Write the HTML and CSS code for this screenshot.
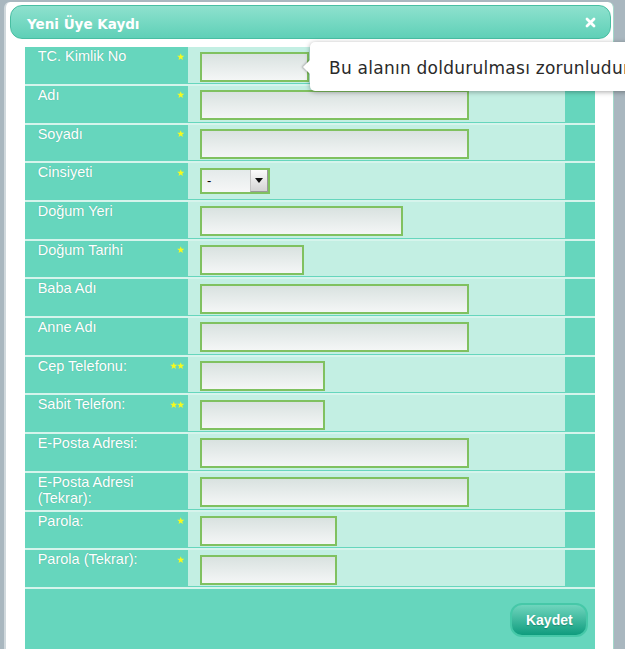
FILE: index.html
```html
<!DOCTYPE html>
<html lang="tr">
<head>
<meta charset="utf-8">
<title>Yeni Üye Kaydı</title>
<link rel="stylesheet" href="styles.css">
</head>
<body>
<div class="dialog">
  <div class="titlebar">
    <span class="title">Yeni Üye Kaydı</span>
    <svg class="close" width="11" height="11" viewBox="0 0 11 11"><path d="M2 2 L9 9 M9 2 L2 9" stroke="#fff" stroke-width="2.8" stroke-linecap="round"/></svg>
  </div>
  <form class="form">
    <div class="row">
      <div class="label"><span class="text">TC. Kimlik No</span><span class="req"><svg class="star" viewBox="0 0 10 10"><polygon points="5,0.3 6.23,3.6 9.76,3.75 7,5.95 7.94,9.35 5,7.4 2.06,9.35 3,5.95 0.24,3.75 3.77,3.6"/></svg></span></div>
      <div class="field"><input class="w-tc" type="text"></div>
      <div class="side"></div>
    </div>
    <div class="row">
      <div class="label"><span class="text">Adı</span><span class="req"><svg class="star" viewBox="0 0 10 10"><polygon points="5,0.3 6.23,3.6 9.76,3.75 7,5.95 7.94,9.35 5,7.4 2.06,9.35 3,5.95 0.24,3.75 3.77,3.6"/></svg></span></div>
      <div class="field"><input class="w-full" type="text"></div>
      <div class="side"></div>
    </div>
    <div class="row">
      <div class="label"><span class="text">Soyadı</span><span class="req"><svg class="star" viewBox="0 0 10 10"><polygon points="5,0.3 6.23,3.6 9.76,3.75 7,5.95 7.94,9.35 5,7.4 2.06,9.35 3,5.95 0.24,3.75 3.77,3.6"/></svg></span></div>
      <div class="field"><input class="w-full" type="text"></div>
      <div class="side"></div>
    </div>
    <div class="row">
      <div class="label"><span class="text">Cinsiyeti</span><span class="req"><svg class="star" viewBox="0 0 10 10"><polygon points="5,0.3 6.23,3.6 9.76,3.75 7,5.95 7.94,9.35 5,7.4 2.06,9.35 3,5.95 0.24,3.75 3.77,3.6"/></svg></span></div>
      <div class="field">
        <div class="select"><select><option>-</option><option>Erkek</option><option>Kadın</option></select><span class="arrow"></span></div>
      </div>
      <div class="side"></div>
    </div>
    <div class="row">
      <div class="label"><span class="text">Doğum Yeri</span></div>
      <div class="field"><input class="w-yer" type="text"></div>
      <div class="side"></div>
    </div>
    <div class="row">
      <div class="label"><span class="text">Doğum Tarihi</span><span class="req"><svg class="star" viewBox="0 0 10 10"><polygon points="5,0.3 6.23,3.6 9.76,3.75 7,5.95 7.94,9.35 5,7.4 2.06,9.35 3,5.95 0.24,3.75 3.77,3.6"/></svg></span></div>
      <div class="field"><input class="w-tarih" type="text"></div>
      <div class="side"></div>
    </div>
    <div class="row">
      <div class="label"><span class="text">Baba Adı</span></div>
      <div class="field"><input class="w-full" type="text"></div>
      <div class="side"></div>
    </div>
    <div class="row">
      <div class="label"><span class="text">Anne Adı</span></div>
      <div class="field"><input class="w-full" type="text"></div>
      <div class="side"></div>
    </div>
    <div class="row">
      <div class="label"><span class="text">Cep Telefonu:</span><span class="req"><svg class="star" viewBox="0 0 10 10"><polygon points="5,0.3 6.23,3.6 9.76,3.75 7,5.95 7.94,9.35 5,7.4 2.06,9.35 3,5.95 0.24,3.75 3.77,3.6"/></svg><svg class="star" viewBox="0 0 10 10"><polygon points="5,0.3 6.23,3.6 9.76,3.75 7,5.95 7.94,9.35 5,7.4 2.06,9.35 3,5.95 0.24,3.75 3.77,3.6"/></svg></span></div>
      <div class="field"><input class="w-tel" type="text"></div>
      <div class="side"></div>
    </div>
    <div class="row">
      <div class="label"><span class="text">Sabit Telefon:</span><span class="req"><svg class="star" viewBox="0 0 10 10"><polygon points="5,0.3 6.23,3.6 9.76,3.75 7,5.95 7.94,9.35 5,7.4 2.06,9.35 3,5.95 0.24,3.75 3.77,3.6"/></svg><svg class="star" viewBox="0 0 10 10"><polygon points="5,0.3 6.23,3.6 9.76,3.75 7,5.95 7.94,9.35 5,7.4 2.06,9.35 3,5.95 0.24,3.75 3.77,3.6"/></svg></span></div>
      <div class="field"><input class="w-tel" type="text"></div>
      <div class="side"></div>
    </div>
    <div class="row">
      <div class="label"><span class="text">E-Posta Adresi:</span></div>
      <div class="field"><input class="w-full" type="text"></div>
      <div class="side"></div>
    </div>
    <div class="row">
      <div class="label"><span class="text">E-Posta Adresi (Tekrar):</span></div>
      <div class="field"><input class="w-full" type="text"></div>
      <div class="side"></div>
    </div>
    <div class="row">
      <div class="label"><span class="text">Parola:</span><span class="req"><svg class="star" viewBox="0 0 10 10"><polygon points="5,0.3 6.23,3.6 9.76,3.75 7,5.95 7.94,9.35 5,7.4 2.06,9.35 3,5.95 0.24,3.75 3.77,3.6"/></svg></span></div>
      <div class="field"><input class="w-pass" type="password"></div>
      <div class="side"></div>
    </div>
    <div class="row">
      <div class="label"><span class="text">Parola (Tekrar):</span><span class="req"><svg class="star" viewBox="0 0 10 10"><polygon points="5,0.3 6.23,3.6 9.76,3.75 7,5.95 7.94,9.35 5,7.4 2.06,9.35 3,5.95 0.24,3.75 3.77,3.6"/></svg></span></div>
      <div class="field"><input class="w-pass" type="password"></div>
      <div class="side"></div>
    </div>
    <div class="footer">
      <button type="button" class="btn">Kaydet</button>
    </div>
  </form>
  <div class="tooltip">Bu alanın doldurulması zorunludur</div>
</div>
</body>
</html>
```

FILE: styles.css
```css
html, body {
  margin: 0;
  height: 100%;
  overflow: hidden;
}
body {
  background: #a9b7bf;
  font-family: "Liberation Sans", Arial, sans-serif;
}
.dialog {
  position: relative;
  box-sizing: border-box;
  width: 610px;
  height: 647px;
  margin: 2px 0 0 4px;
  padding-top: 3px;
  background: #fff;
  border-left: 2px solid #d0d8dc;
  border-right: 1px solid #a3d8ca;
  border-radius: 6px 6px 0 0;
}
.titlebar {
  box-sizing: border-box;
  display: flex;
  align-items: center;
  justify-content: space-between;
  width: 601px;
  height: 34px;
  margin-left: 4px;
  padding: 0 14px 0 16px;
  border: 1px solid #49bea2;
  border-radius: 12px;
  background: linear-gradient(#8ee1ce, #5fd0b7);
}
.title {
  padding-top: 3px;
  color: #fff;
  font-family: "DejaVu Sans", sans-serif;
  font-weight: bold;
  font-size: 13.5px;
}
.close {
  display: block;
}
.form {
  width: 570px;
  margin: 8.3px 0 0 19px;
  background: #66d6bd;
}
.row {
  display: flex;
  height: 36.7px;
  border-bottom: 2px solid #d6f4ec;
}
.label {
  box-sizing: border-box;
  display: flex;
  width: 162.5px;
  padding: 1px 3px 0 12.7px;
  color: #fff;
  font-size: 14.5px;
  line-height: 16px;
  text-shadow: 0 0 1px rgba(30, 110, 90, 0.35);
}
.label .text {
  flex: 1;
}
.req {
  display: flex;
  margin-top: 4.5px;
}
.star {
  display: block;
  width: 7.5px;
  height: 7.5px;
  fill: #f6fa1e;
}
.field {
  box-sizing: border-box;
  flex: 1;
  margin-bottom: 1px;
  padding-left: 12.5px;
  background: #c3efe3;
}
.side {
  width: 30px;
}
input {
  display: block;
  box-sizing: border-box;
  height: 30px;
  margin: 4.3px 0 0 0;
  padding: 0 4px;
  border: 2px solid #80c160;
  background: linear-gradient(#d9e2e0, #f4f6f6);
  font: 13px "Liberation Sans", Arial, sans-serif;
  outline: none;
}
.w-full { width: 269px; }
.w-tc { width: 109px; }
.w-yer { width: 203px; }
.w-tarih { width: 104px; }
.w-tel { width: 125px; }
.w-pass { width: 137px; }
.select {
  box-sizing: border-box;
  display: flex;
  width: 70px;
  height: 26px;
  margin-top: 4.6px;
  border: 2px solid #80c160;
  background: linear-gradient(#e4eaea, #f6f7f7);
}
.select select {
  flex: 1;
  min-width: 0;
  margin: 0;
  padding: 0 0 0 5px;
  border: none;
  background: transparent;
  font: 13px "Liberation Sans", Arial, sans-serif;
  color: #000;
  appearance: none;
  -webkit-appearance: none;
  outline: none;
}
.arrow {
  box-sizing: border-box;
  display: flex;
  align-items: center;
  justify-content: center;
  width: 18px;
  border-left: 1px solid #c4c4c4;
  border-right: 1px solid #9a9a9a;
  border-bottom: 1px solid #9a9a9a;
  background: linear-gradient(#fbfbfb, #d4d4d4);
}
.arrow::after {
  content: "";
  width: 0;
  height: 0;
  border-left: 4px solid transparent;
  border-right: 4px solid transparent;
  border-top: 5px solid #111;
}
.footer {
  box-sizing: border-box;
  display: flex;
  justify-content: flex-end;
  align-items: flex-start;
  height: 60px;
  padding: 13.6px 6.7px 0 0;
}
.btn {
  box-sizing: border-box;
  width: 78px;
  height: 34px;
  padding: 0;
  border: 2px solid #46c8a8;
  border-radius: 12px;
  background: linear-gradient(#6fd5bd, #0f9c7e);
  color: #fff;
  font: bold 14px "Liberation Sans", Arial, sans-serif;
  text-shadow: 0 1px 1px rgba(0, 60, 40, 0.3);
}
.tooltip {
  position: absolute;
  left: 304px;
  top: 39.7px;
  box-sizing: border-box;
  width: 360px;
  height: 49px;
  padding: 16px 0 0 19px;
  background: #fff;
  border-radius: 5px;
  box-shadow: 0 1px 5px rgba(0, 0, 0, 0.35);
  color: #2a2a2a;
  font-family: "DejaVu Sans", sans-serif;
  font-size: 17px;
  letter-spacing: 0.25px;
  line-height: 20px;
  white-space: nowrap;
}
.tooltip::before {
  content: "";
  position: absolute;
  left: -5px;
  top: 20px;
  width: 10px;
  height: 10px;
  background: #fff;
  transform: rotate(45deg);
  box-shadow: -1px 1px 2px rgba(0, 0, 0, 0.25);
}
.tooltip::after {
  content: "";
  position: absolute;
  left: 0;
  top: 14px;
  width: 10px;
  height: 22px;
  background: #fff;
}
```
